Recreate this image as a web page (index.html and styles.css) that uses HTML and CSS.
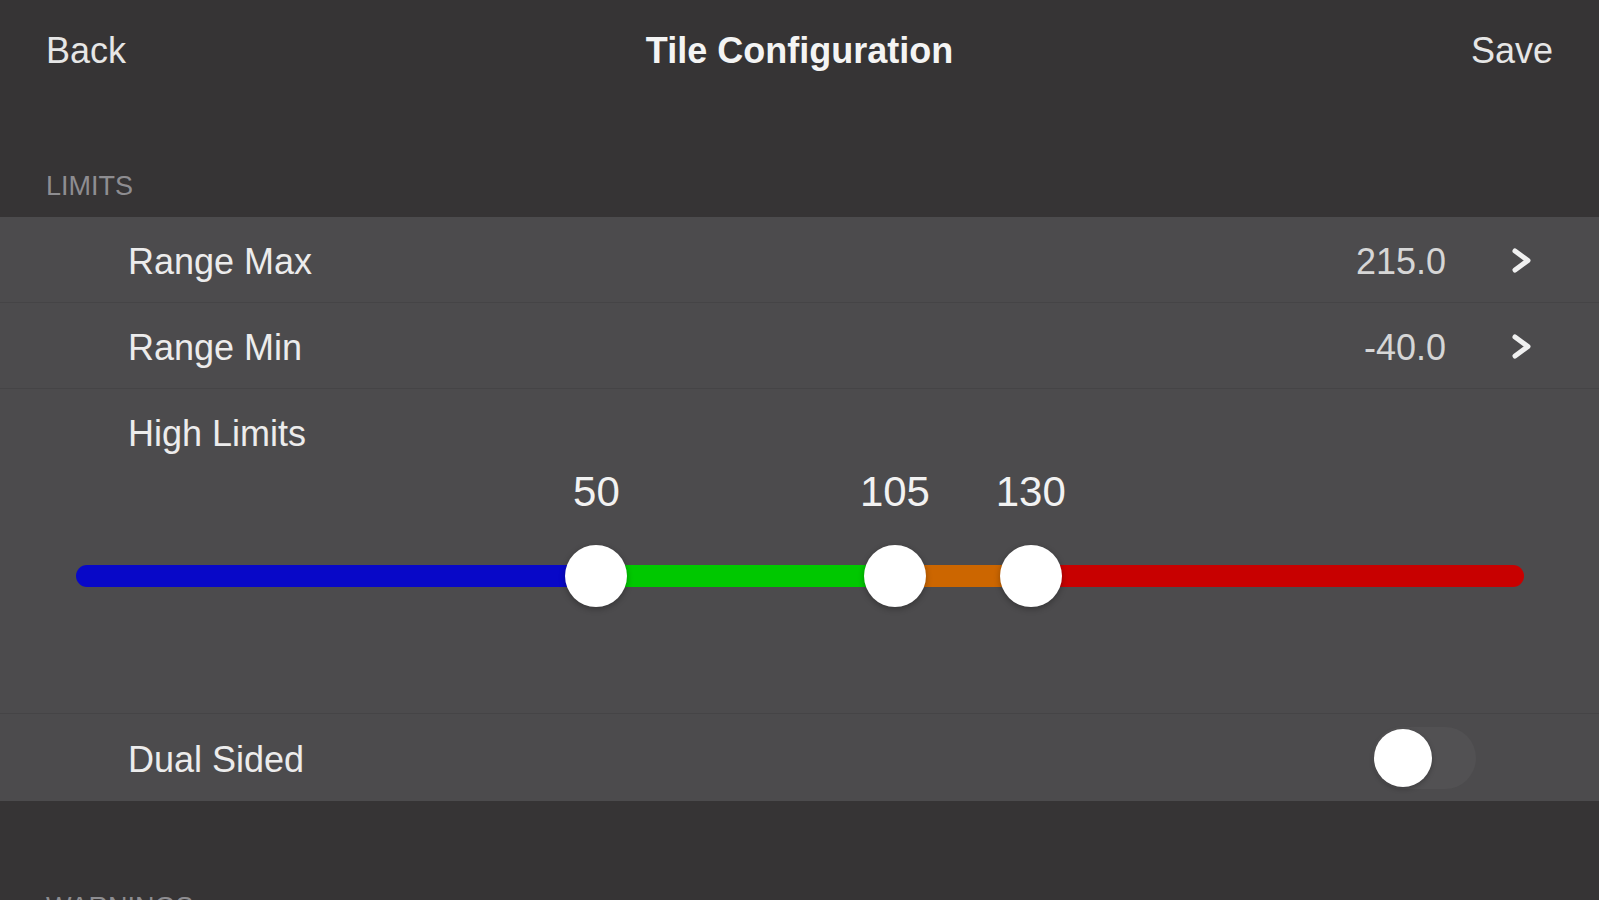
FILE: index.html
```html
<!DOCTYPE html>
<html>
  <head>
    <title>Tile Configuration</title>
    <link rel="stylesheet" href="styles.css">
  </head>
  <body>
    <header class="navbar">
      <span class="nav-btn">Back</span>
      <h1>Tile Configuration</h1>
      <span class="nav-btn nav-right">Save</span>
    </header>

    <div class="section-title">LIMITS</div>
    <div class="group">
      <div class="row">
        <span class="row-label">Range Max</span>
        <span class="row-value">215.0</span>
        <svg class="chevron" width="23" height="27" viewBox="0 0 23 27">
          <polyline points="5,4 18,13.5 5,23" />
        </svg>
      </div>
      <div class="row">
        <span class="row-label">Range Min</span>
        <span class="row-value">-40.0</span>
        <svg class="chevron" width="23" height="27" viewBox="0 0 23 27">
          <polyline points="5,4 18,13.5 5,23" />
        </svg>
      </div>
      <div class="slider-row">
        <div class="row-label">High Limits</div>
        <!-- range -40..215, thumbs at 50 / 105 / 130 -->
        <div class="slider">
          <div class="slider-labels">
            <span class="slider-label" style="left: calc(32px + (100% - 64px) * 0.3529)">50</span>
            <span class="slider-label" style="left: calc(32px + (100% - 64px) * 0.5686)">105</span>
            <span class="slider-label" style="left: calc(32px + (100% - 64px) * 0.6667)">130</span>
          </div>
          <div class="slider-track">
            <div class="bar">
              <div class="seg seg-blue" style="width: calc(32px + (100% - 64px) * 0.3529)"></div>
              <div class="seg seg-green" style="width: calc((100% - 64px) * 0.2157)"></div>
              <div class="seg seg-orange" style="width: calc((100% - 64px) * 0.0981)"></div>
              <div class="seg seg-red"></div>
            </div>
            <span class="thumb" style="left: calc(32px + (100% - 64px) * 0.3529)"></span>
            <span class="thumb" style="left: calc(32px + (100% - 64px) * 0.5686)"></span>
            <span class="thumb" style="left: calc(32px + (100% - 64px) * 0.6667)"></span>
          </div>
        </div>
      </div>
      <div class="row row-top">
        <span class="row-label">Dual Sided</span>
        <span class="switch"><span class="knob"></span></span>
      </div>
    </div>

    <div class="section-title section-next">WARNINGS</div>
  </body>
</html>
```

FILE: styles.css
```css
body {
  margin: 0;
  padding: 0;
  background-color: #363435;
  color: #ececec;
  font-family: "Liberation Sans", Arial, sans-serif;
  overflow: hidden;
}
.navbar {
  display: grid;
  grid-template-columns: 1fr auto 1fr;
  align-items: center;
  height: 102px;
  padding: 0 46px;
}
.navbar h1 {
  margin: 0;
  font-size: 36px;
  font-weight: bold;
  color: #f4f4f4;
}
.nav-btn {
  font-size: 36px;
  color: #e6e6e6;
}
.nav-right {
  justify-self: end;
}
.section-title {
  padding: 71px 46px 17px;
  font-size: 27px;
  line-height: 27px;
  color: #8e8d91;
}
.section-next {
  padding-top: 93px;
}
.group {
  background-color: #4c4b4d;
}
.row {
  display: flex;
  align-items: center;
  box-sizing: border-box;
  height: 86px;
  padding: 5px 66px 0 128px;
  border-bottom: 1px solid #454446;
  font-size: 36px;
}
.row-top {
  height: 88px;
  border-top: 1px solid #454446;
  border-bottom: none;
}
.row-label {
  flex: 1;
  font-size: 36px;
  color: #ececec;
}
.row-value {
  color: #d6d6d6;
}
.chevron {
  margin-left: 64px;
  margin-top: -4px;
}
.chevron polyline {
  fill: none;
  stroke: #f0f0f0;
  stroke-width: 5;
  stroke-linecap: round;
  stroke-linejoin: round;
}
.slider-row {
  height: 301px;
  padding-top: 23px;
}
.slider-row .row-label {
  padding-left: 128px;
  line-height: 43px;
}
.slider {
  margin: 0 75px 0 76px;
}
.slider-labels {
  position: relative;
  height: 50px;
  margin-top: 12px;
}
.slider-label {
  position: absolute;
  top: 0;
  transform: translateX(-50%);
  font-size: 42px;
  line-height: 50px;
  color: #f2f2f2;
}
.slider-track {
  position: relative;
  display: flex;
  align-items: center;
  height: 64px;
  margin-top: 27px;
}
.bar {
  display: flex;
  width: 100%;
  height: 22px;
  border-radius: 11px;
  overflow: hidden;
}
.seg {
  height: 100%;
}
.seg-blue {
  background-color: #0808c8;
}
.seg-green {
  background-color: #00c800;
}
.seg-orange {
  background-color: #cc6600;
}
.seg-red {
  flex: 1;
  background-color: #c80000;
}
.thumb {
  position: absolute;
  top: 1px;
  width: 62px;
  height: 62px;
  border-radius: 50%;
  background-color: #fff;
  transform: translateX(-50%);
  box-shadow: 0 2px 6px rgba(0, 0, 0, 0.3);
}
.switch {
  display: flex;
  align-items: center;
  width: 104px;
  height: 62px;
  margin-right: 57px;
  margin-top: -4px;
  border-radius: 31px;
  background-color: #525153;
}
.knob {
  width: 58px;
  height: 58px;
  margin-left: 2px;
  border-radius: 50%;
  background-color: #fff;
  box-shadow: 0 2px 5px rgba(0, 0, 0, 0.25);
}
```
